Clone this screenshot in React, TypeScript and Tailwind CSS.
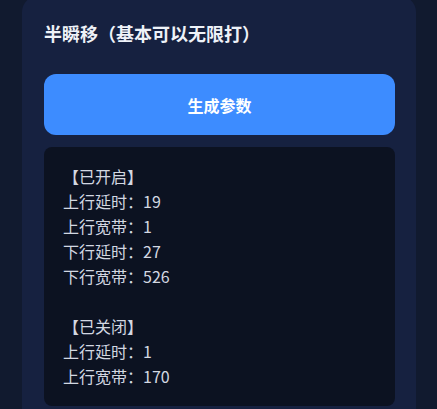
import React from "react";

const lines = [
  "【已开启】",
  "上行延时：19",
  "上行宽带：1",
  "下行延时：27",
  "下行宽带：526",
  "",
  "【已关闭】",
  "上行延时：1",
  "上行宽带：170",
];

export default function App() {
  return (
    <div
      className="min-h-screen w-full overflow-hidden bg-[#111a2f] pl-[22px] pr-[21px]"
      style={{ fontFamily: '"Noto Sans CJK SC", "Noto Sans", sans-serif' }}
    >
      <div className="-mt-[4px] rounded-2xl bg-[#162140] pl-[22px] pr-[21px] pt-[23px] pb-10">
        <h2 className="text-[18px] leading-[28px] font-bold text-[#eef2f8]">
          半瞬移（基本可以无限打）
        </h2>
        <button className="mt-[27px] flex h-[61px] w-full items-center justify-center rounded-xl bg-[#3d8cff] text-[16px] font-bold text-white">
          生成参数
        </button>
        <div className="mt-[12px] rounded-lg bg-[#0c1221] px-[19px] py-[17px] text-[16px] leading-[25px] text-[#d3d8e1]">
          {lines.map((l, i) => (
            <div key={i} className="h-[25px] whitespace-pre">
              {l}
            </div>
          ))}
        </div>
      </div>
    </div>
  );
}
